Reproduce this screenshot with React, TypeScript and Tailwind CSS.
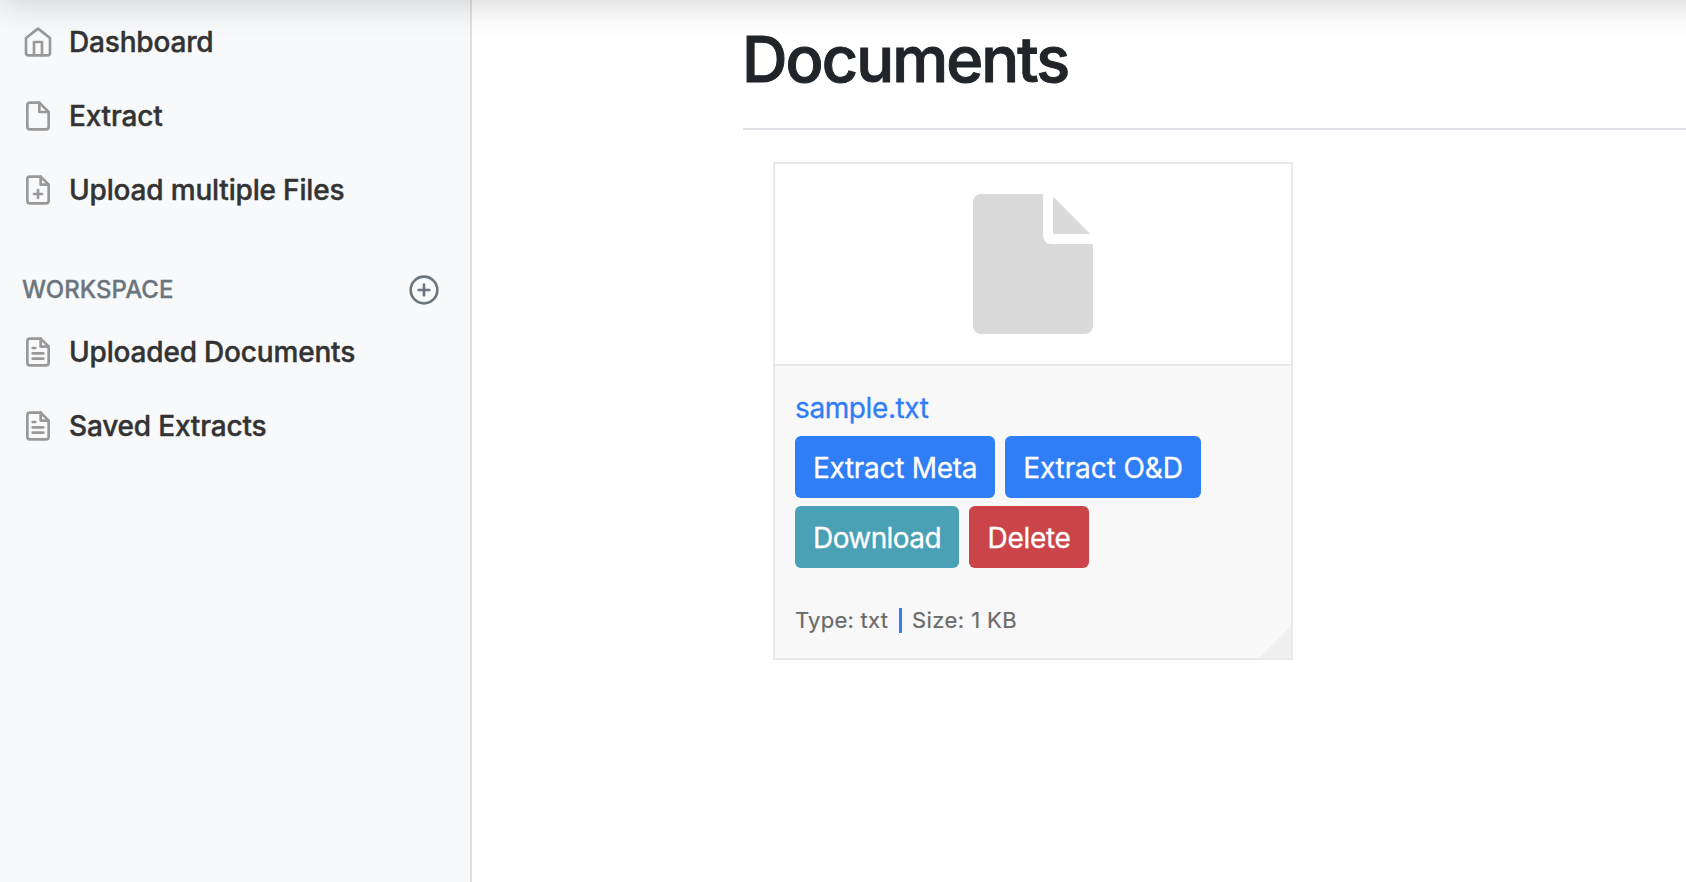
import type { ReactNode } from "react";

type IconName = "home" | "file" | "file-plus" | "file-text" | "plus-circle";

const shapes: Record<IconName, ReactNode> = {
  home: (
    <>
      <path d="M3 9l9-7 9 7v11a2 2 0 0 1-2 2H5a2 2 0 0 1-2-2z" />
      <polyline points="9 22 9 12 15 12 15 22" />
    </>
  ),
  file: (
    <>
      <path d="M13 2H6a2 2 0 0 0-2 2v16a2 2 0 0 0 2 2h12a2 2 0 0 0 2-2V9z" />
      <polyline points="13 2 13 9 20 9" />
    </>
  ),
  "file-plus": (
    <>
      <path d="M14 2H6a2 2 0 0 0-2 2v16a2 2 0 0 0 2 2h12a2 2 0 0 0 2-2V8z" />
      <polyline points="14 2 14 8 20 8" />
      <line x1="12" y1="18" x2="12" y2="12" />
      <line x1="9" y1="15" x2="15" y2="15" />
    </>
  ),
  "file-text": (
    <>
      <path d="M14 2H6a2 2 0 0 0-2 2v16a2 2 0 0 0 2 2h12a2 2 0 0 0 2-2V8z" />
      <polyline points="14 2 14 8 20 8" />
      <line x1="16" y1="13" x2="8" y2="13" />
      <line x1="16" y1="17" x2="8" y2="17" />
      <polyline points="10 9 9 9 8 9" />
    </>
  ),
  "plus-circle": (
    <>
      <circle cx="12" cy="12" r="10" />
      <line x1="12" y1="8" x2="12" y2="16" />
      <line x1="8" y1="12" x2="16" y2="12" />
    </>
  ),
};

function Icon({ name, className }: { name: IconName; className?: string }) {
  return (
    <svg
      viewBox="0 0 24 24"
      fill="none"
      stroke="currentColor"
      strokeWidth="2"
      strokeLinecap="round"
      strokeLinejoin="round"
      className={`size-8 shrink-0 ${className ?? ""}`}
    >
      {shapes[name]}
    </svg>
  );
}

function NavItem({ icon, label }: { icon: IconName; label: string }) {
  return (
    <a href="#" className="flex h-[74px] items-center pl-[22px] text-[28px] leading-[42px] font-medium text-[#333]">
      <Icon name={icon} className="text-[#999]" />
      <span className="ml-[15px] tracking-[-0.18px] whitespace-nowrap [-webkit-text-stroke:0.4px_#333]">{label}</span>
    </a>
  );
}

function Button({ label, className }: { label: string; className: string }) {
  return (
    <button className={`flex h-[62px] items-center justify-center rounded-[6px] pt-[2px] text-[28px] leading-[42px] whitespace-nowrap text-white [-webkit-text-stroke:0.3px_white] ${className}`}>
      {label}
    </button>
  );
}

export default function App() {
  return (
    <div className="relative flex h-[882px] w-full overflow-hidden bg-white font-['Inter',sans-serif]">
      <div className="pointer-events-none absolute -top-[110px] -right-12 left-0 z-10 h-[100px] shadow-[0_16px_32px_rgba(0,0,0,0.15)]" />

      <aside className="w-[472px] shrink-0 border-r-2 border-[#dfe0e1] bg-[#f8f9fb] pt-[5px]">
        <nav>
          <NavItem icon="home" label="Dashboard" />
          <NavItem icon="file" label="Extract" />
          <NavItem icon="file-plus" label="Upload multiple Files" />
        </nav>
        <div className="mt-[45px] flex h-[36px] items-center justify-between pr-[30px] pl-[22px] text-[#6c757d]">
          <h6 className="text-2xl leading-9 font-medium [-webkit-text-stroke:0.3px_#6c757d]">WORKSPACE</h6>
          <Icon name="plus-circle" />
        </div>
        <nav className="mt-[7px]">
          <NavItem icon="file-text" label="Uploaded Documents" />
          <NavItem icon="file-text" label="Saved Extracts" />
        </nav>
      </aside>

      <main className="min-w-0 flex-1 pl-[271px]">
        <header className="h-[130px] border-b-2 border-[#dee2e6] pt-[21px]">
          <h1 className="-ml-px text-[63px] leading-[77px] font-medium tracking-[-1.9px] text-[#212529] [-webkit-text-stroke:1px_#212529]">Documents</h1>
        </header>

        <article className="mt-[32px] ml-[30px] h-[498px] w-[520px] border-2 border-[#e9e9e9]">
          <div className="flex h-[202px] justify-center border-b-2 border-[#e9e9e9] pt-[30px]">
            <svg viewBox="0 0 120 140" className="h-[140px] w-[120px] fill-[#dadada]">
              <path d="M8 0H70V42A8 8 0 0 0 78 50H120V132A8 8 0 0 1 112 140H8A8 8 0 0 1 0 132V8A8 8 0 0 1 8 0Z" />
              <path d="M80 3Q81 3.4 82 4.5L115.200 38Q116.200 39 116.800 40H80Z" />
            </svg>
          </div>
          <div className="relative h-[292px] bg-[#f8f8f8] px-5 pt-[20px]">
            <a href="#" className="block h-[50px] text-[28px] leading-[44px] tracking-[-0.4px] text-[#2f7ef6] [-webkit-text-stroke:0.3px_#2f7ef6]">sample.txt</a>
            <div className="flex gap-[10px]">
              <Button label="Extract Meta" className="w-[200px] bg-[#2f7ef6] tracking-[-0.3px]" />
              <Button label="Extract O&D" className="w-[196px] bg-[#2f7ef6] tracking-[-0.1px]" />
            </div>
            <div className="mt-2 flex gap-[10px]">
              <Button label="Download" className="w-[164px] bg-[#4aa0b5] tracking-[-0.6px]" />
              <Button label="Delete" className="w-[120px] bg-[#ca444a] tracking-[-0.3px]" />
            </div>
            <div className="mt-[34px] flex h-9 items-center text-[22px] text-[#6a6a6a] [-webkit-text-stroke:0.2px_#6a6a6a]">
              <span className="tracking-[0.25px]">Type: txt</span>
              <span className="mr-[10px] ml-[11px] h-[25px] w-[3px] bg-[#2f7ef6]" />
              <span className="tracking-[0.4px]">Size: 1 KB</span>
            </div>
            <svg viewBox="0 0 32 32" className="absolute right-0 bottom-0 size-8 fill-[#f0f0f0]">
              <path d="M32 0V32H0Z" />
            </svg>
          </div>
        </article>
      </main>
    </div>
  );
}
